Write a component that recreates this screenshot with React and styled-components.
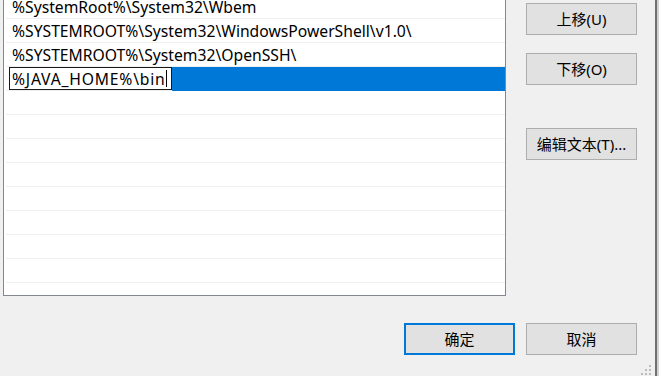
import React from "react";
import styled, { createGlobalStyle } from "styled-components";

const Global = createGlobalStyle`
  html, body { margin: 0; padding: 0; background: #d2d2d2; overflow: hidden; }
  body { width: 659px; height: 376px; }
  * { box-sizing: border-box; }
`;

const FONT = `"Noto Sans", "Noto Sans CJK SC", sans-serif`;

const Window = styled.div`
  position: relative;
  width: 657px;
  height: 376px;
  background: #f0f0f0;
  border-right: 2px solid #707070;
  overflow: hidden;
  font-family: ${FONT};
  font-size: 15px;
  color: #000;
  display: flex;
  flex-direction: column;
`;

const Top = styled.div`
  display: flex;
  align-items: flex-start;
`;

const ListBox = styled.div`
  margin-left: 3px;
  margin-top: -6px;
  width: 503px;
  height: 302px;
  background: #fff;
  border: 1px solid #828790;
  display: flex;
  flex-direction: column;
  overflow: hidden;
  font-size: 15.7px;
`;

const Row = styled.div`
  flex: none;
  height: 24px;
  margin-left: 2px;
  border-bottom: 1px solid #efefef;
  display: flex;
  align-items: center;
  padding-left: ${(p) => (p.$editing ? "3px" : "6px")};
  padding-top: ${(p) => (p.$editing ? "0" : "2px")};
  white-space: nowrap;
  line-height: 1;
`;

const EditBox = styled.div`
  height: 23px;
  width: 163px;
  border: 1px solid #1a1a1a;
  background: #fff;
  display: flex;
  align-items: center;
  padding-left: 2px;
  padding-top: 2px;
  letter-spacing: 0.8px;
`;

const Caret = styled.span`
  display: inline-block;
  width: 1px;
  height: 17px;
  background: #000;
  margin-left: 0px;
  margin-top: -2px;
`;

const Highlight = styled.div`
  flex: 1;
  align-self: stretch;
  background: #0078d7;
  margin-bottom: -1px;
`;

const SideButtons = styled.div`
  margin-left: 20px;
  padding-top: 3px;
  display: flex;
  flex-direction: column;
`;

const Button = styled.button`
  width: 111px;
  height: 32px;
  margin: 0;
  margin-top: ${(p) => p.$gap || 0}px;
  padding: 0;
  background: #e1e1e1;
  border: ${(p) => (p.$default ? "2px solid #0078d7" : "1px solid #adadad")};
  font-family: ${FONT};
  font-size: 15px;
  color: #000;
  display: flex;
  align-items: center;
  justify-content: center;
  line-height: 1;
`;

const Bottom = styled.div`
  margin-top: 27px;
  display: flex;
  justify-content: flex-end;
  gap: 11px;
  padding-right: 18px;
`;

const Grip = styled.svg`
  position: absolute;
  right: 3px;
  bottom: 0;
`;

const rows = [
  "%SystemRoot%\\System32\\Wbem",
  "%SYSTEMROOT%\\System32\\WindowsPowerShell\\v1.0\\",
  "%SYSTEMROOT%\\System32\\OpenSSH\\",
];

export default function App() {
  return (
    <>
      <Global />
      <Window>
        <Top>
          <ListBox>
            {rows.map((r) => (
              <Row key={r}>{r}</Row>
            ))}
            <Row $editing>
              <EditBox>
                %JAVA_HOME%\bin
                <Caret />
              </EditBox>
              <Highlight />
            </Row>
            {Array.from({ length: 8 }).map((_, i) => (
              <Row key={"e" + i} />
            ))}
          </ListBox>
          <SideButtons>
            <Button>上移(U)</Button>
            <Button $gap={18}>下移(O)</Button>
            <Button $gap={43}>编辑文本(T)...</Button>
          </SideButtons>
        </Top>
        <Bottom>
          <Button $default>确定</Button>
          <Button>取消</Button>
        </Bottom>
        <Grip width="12" height="12" viewBox="0 0 12 12">
          <g fill="#bcbcbc">
            <rect x="9" y="1" width="2" height="2" />
            <rect x="5" y="5" width="2" height="2" />
            <rect x="9" y="5" width="2" height="2" />
            <rect x="1" y="9" width="2" height="2" />
            <rect x="5" y="9" width="2" height="2" />
            <rect x="9" y="9" width="2" height="2" />
          </g>
        </Grip>
      </Window>
    </>
  );
}
